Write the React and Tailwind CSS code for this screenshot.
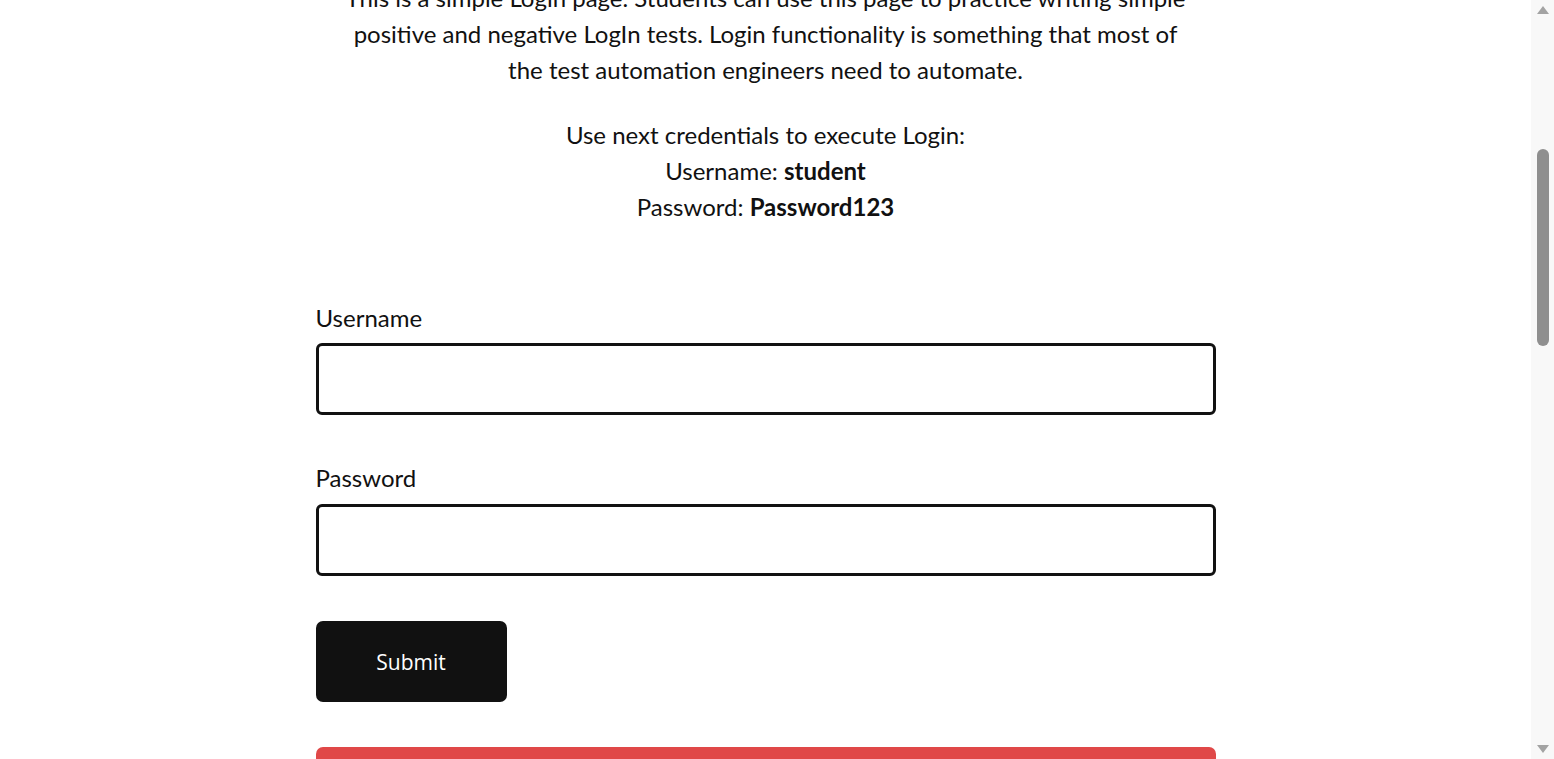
import React from 'react';

const Scrollbar = () => (
  <div className="w-[23px] h-[759px] bg-[#f8f8f8] flex flex-col items-center shrink-0">
    <svg width="14" height="10" viewBox="0 0 14 10" className="mt-[5px]">
      <path d="M7 1 L13 9 L1 9 Z" fill="#a3a3a3" />
    </svg>
    <div className="w-[12px] h-[197px] mt-[134px] ml-[1px] rounded-full bg-[#8f8f8f]"></div>
    <div className="flex-1"></div>
    <svg width="14" height="10" viewBox="0 0 14 10" className="mb-[5px]">
      <path d="M1 1 L13 1 L7 9 Z" fill="#a3a3a3" />
    </svg>
  </div>
);

const App = () => {
  return (
    <div className="flex h-[759px] overflow-hidden bg-white text-[#111] font-['Lato',sans-serif]">
      <div className="flex-1 flex justify-center">
        <div className="w-[900px] -mt-[20px] text-[24px] leading-[36px]">
          <p className="text-center w-[850px] mx-auto">
            This is a simple Login page. Students can use this page to practice writing simple
            positive and negative LogIn tests. Login functionality is something that most of
            the test automation engineers need to automate.
          </p>
          <p className="text-center mt-[29px]">
            Use next credentials to execute Login:<br />
            Username: <b>student</b><br />
            Password: <b>Password123</b>
          </p>

          <div className="mt-[75px] flex flex-col">
            <label className="leading-[36px]">Username</label>
            <input type="text" className="mt-[7px] h-[72px] w-full border-[3px] border-[#111] rounded-[6px] px-4 outline-none" />
            <label className="mt-[45px] leading-[36px]">Password</label>
            <input type="password" className="mt-[8px] h-[72px] w-full border-[3px] border-[#111] rounded-[6px] px-4 outline-none" />
            <button className="mt-[45px] w-[191px] h-[81px] bg-[#111] text-white rounded-[7px] text-[21px] font-['Open_Sans',sans-serif]">
              Submit
            </button>
            <div className="mt-[45px] h-[40px] w-full bg-[#e04848] rounded-t-[7px]"></div>
          </div>
        </div>
      </div>
      <Scrollbar />
    </div>
  );
};

export default App;
